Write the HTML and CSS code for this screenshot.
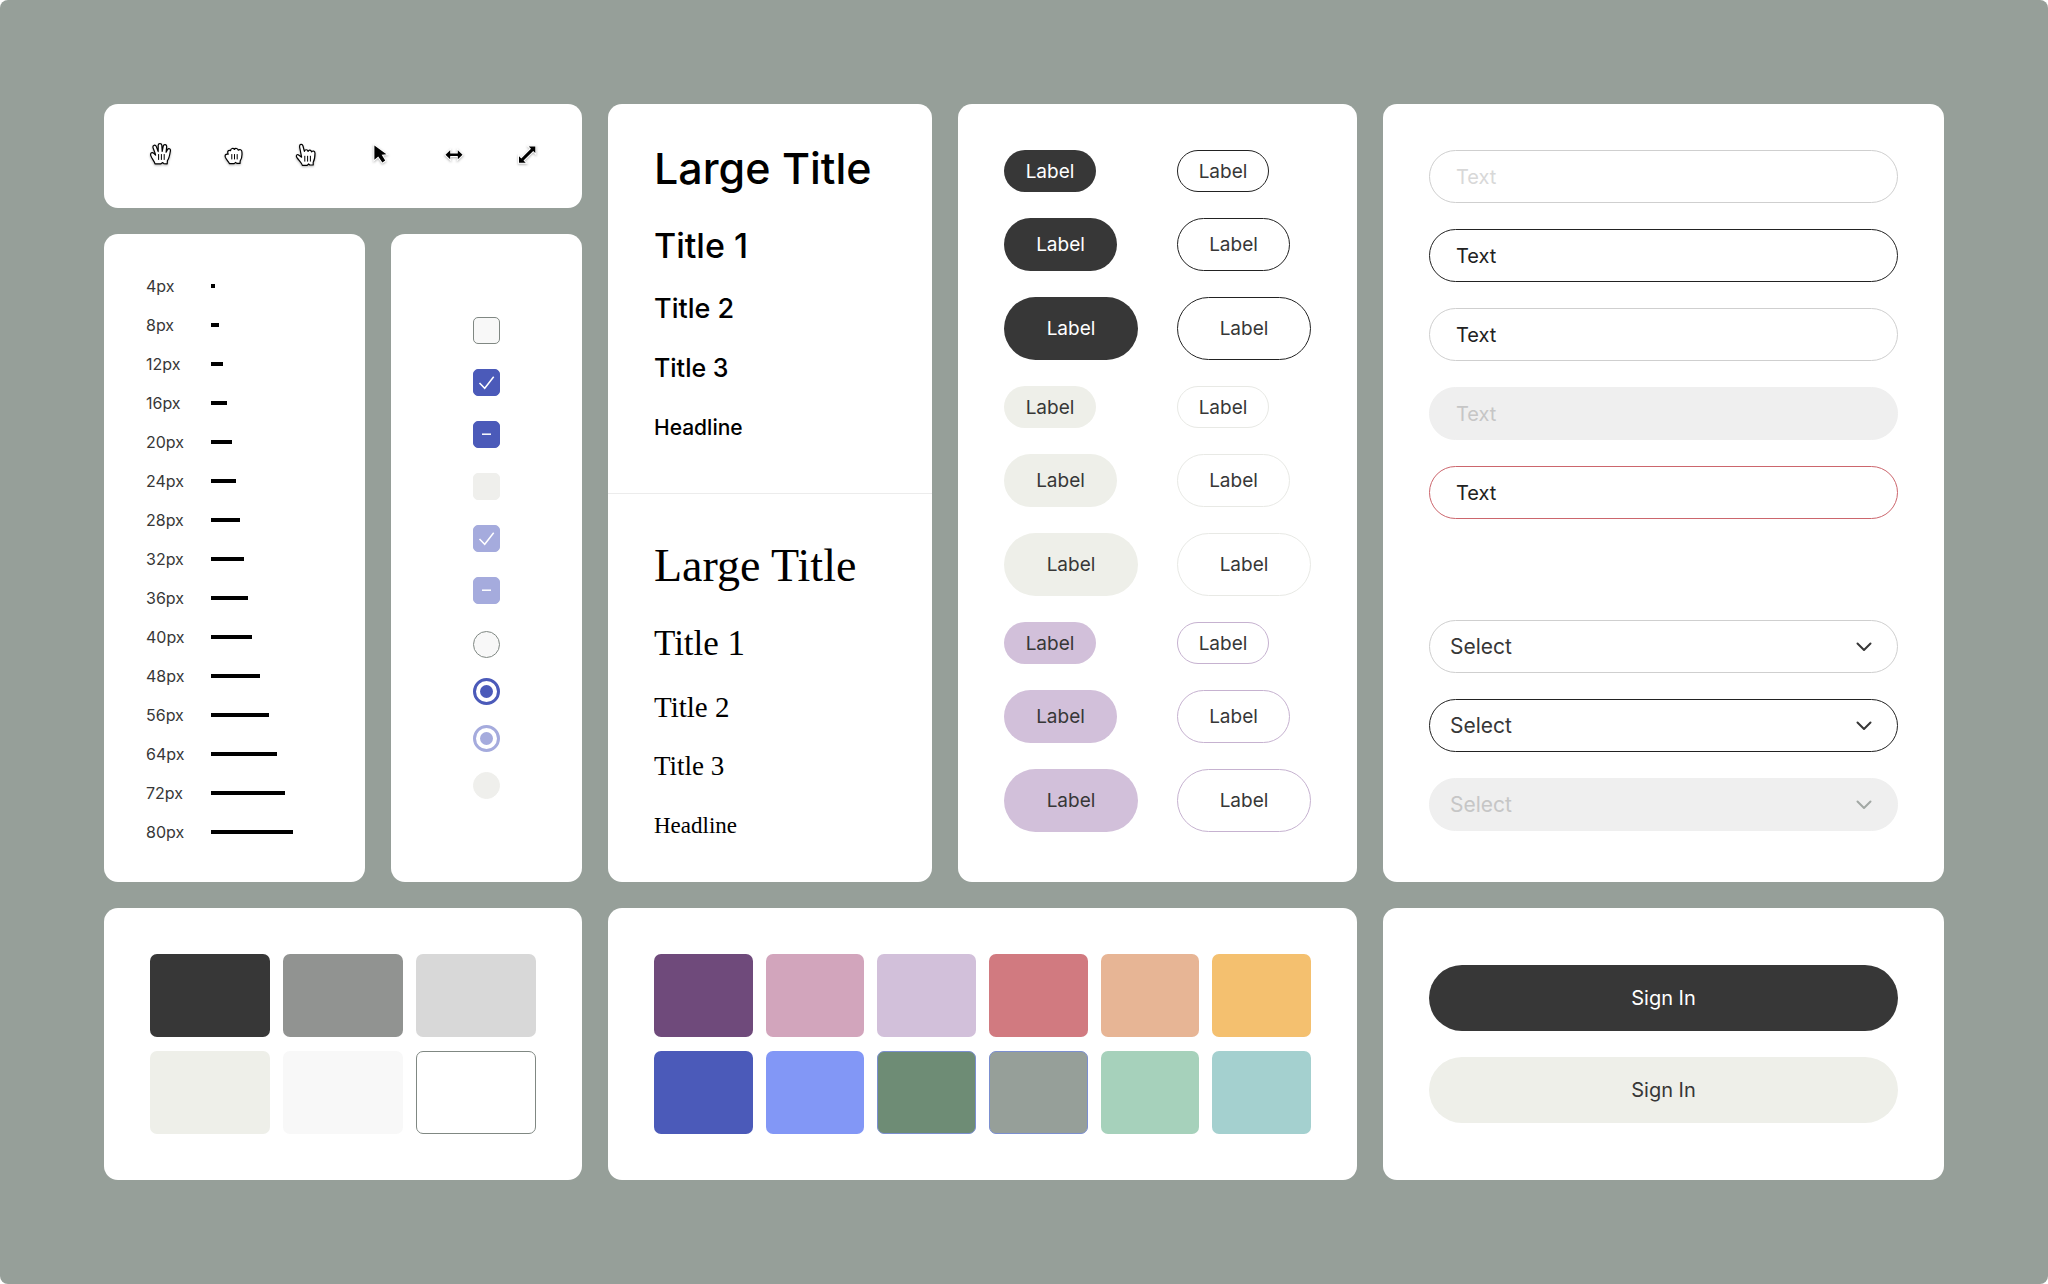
FILE: index.html
```html
<!DOCTYPE html>
<html lang="en">
<head>
    <meta charset="UTF-8">
    <meta name="viewport" content="width=device-width, initial-scale=1.0">
    <title>Design System</title>
    <link rel="stylesheet" href="styles.css">
</head>
<body>
    <main class="board">
        <!-- Cursors -->
        <section class="panel cursors">
            <svg class="cursor hand" viewBox="0 0 32 32" role="img" aria-label="Open hand">
                <path d="M11 24.8C10.6 22.6 7.6 19.4 6.8 16.6C6 13.8 8.4 12.8 9.8 14.4L11.6 16.2C11.3 13.6 9.6 10.8 9 8.6C8.5 6 11.4 5.4 12.3 7.6L14.2 12.6L14.2 6.2C14.3 4 17.6 4 17.8 6.2L18.2 12.4L19.3 7C19.8 4.8 22.8 5.2 22.7 7.6L22.1 13.2L23.6 10.4C24.6 8.8 26.8 9.6 26.4 11.8C25.8 15.4 25.4 19.2 23.4 21.6L23.2 24.8L19.8 24.6L18.4 23.6L17 24.8Z"/>
                <path class="lines" d="M14.6 15.5V20.5M17.4 15.5V20.5M20.2 15.5V20.5"/>
            </svg>
            <svg class="cursor hand" viewBox="0 0 32 32" role="img" aria-label="Closed hand">
                <path d="M12.4 24.6C12 23 9.2 20.6 8.4 18.4C7.6 16 8.6 14.8 11.2 15.2C10.2 12.6 10.8 10.8 13.6 11.6C13.6 9.2 16.4 8.8 17.4 10.4C18.4 8.8 20.8 9.4 21.2 11.2C22.8 9.8 24.8 11 24.9 12.8C25.2 16 25.2 19.4 23.2 21.8L23 24.4L19.8 24.4L18.6 23.4L17.2 24.6Z"/>
                <path class="lines" d="M14.8 15.5V20M17.5 15.5V20M20.2 15.5V20"/>
            </svg>
            <svg class="cursor hand" viewBox="0 0 32 32" role="img" aria-label="Pointing hand">
                <path d="M12.4 26.4C12 24.2 8.8 21.4 6.8 18.4C5.4 16 7.4 14.8 9 16.2L11.6 18.2L9.6 8C9.2 5 12.2 4.4 13 7L14.4 12.4C15 10 17.6 10.4 18 12.4C19 10.4 21.2 11 21.6 13C22.8 11.2 25 12 25 14.2C25 17.6 24.6 20.8 23.2 23.2L23.2 26L19.8 26L18.6 25L17.2 26.4Z"/>
                <path class="lines" d="M14.8 17.2V22.2M17.6 17.2V22.2M20.4 17.2V22.2"/>
            </svg>
            <svg class="cursor solid" viewBox="0 0 32 32" role="img" aria-label="Arrow">
                <path d="M10.4 6.5V20.8L14.2 17.4L18.4 23.4L21.2 21.6L17.6 15.8L22.4 15.2Z"/>
            </svg>
            <svg class="cursor solid" viewBox="0 0 32 32" role="img" aria-label="Resize horizontally">
                <path d="M8.5 15.7L13.2 11.2V14.5H20.8V11.2L25.5 15.7L20.8 20.2V16.9H13.2V20.2Z"/>
            </svg>
            <svg class="cursor solid" viewBox="0 0 32 32" role="img" aria-label="Resize diagonally">
                <path d="M25.3 7.5V14L23.2 11.9L13.5 21.5L15.7 23.8H9V17.2L11.3 19.4L21 9.7L18.8 7.5Z"/>
            </svg>
        </section>

        <!-- Spacing scale -->
        <section class="panel spacing">
            <ul class="scale">
                <li><span>4px</span><i class="bar" style="width: 4px"></i></li>
                <li><span>8px</span><i class="bar" style="width: 8px"></i></li>
                <li><span>12px</span><i class="bar" style="width: 12px"></i></li>
                <li><span>16px</span><i class="bar" style="width: 16px"></i></li>
                <li><span>20px</span><i class="bar" style="width: 21px"></i></li>
                <li><span>24px</span><i class="bar" style="width: 25px"></i></li>
                <li><span>28px</span><i class="bar" style="width: 29px"></i></li>
                <li><span>32px</span><i class="bar" style="width: 33px"></i></li>
                <li><span>36px</span><i class="bar" style="width: 37px"></i></li>
                <li><span>40px</span><i class="bar" style="width: 41px"></i></li>
                <li><span>48px</span><i class="bar" style="width: 49px"></i></li>
                <li><span>56px</span><i class="bar" style="width: 58px"></i></li>
                <li><span>64px</span><i class="bar" style="width: 66px"></i></li>
                <li><span>72px</span><i class="bar" style="width: 74px"></i></li>
                <li><span>80px</span><i class="bar" style="width: 82px"></i></li>
            </ul>
        </section>

        <!-- Checkboxes and radios -->
        <section class="panel toggles">
            <div class="checks">
                <label class="check"><input type="checkbox" aria-label="Unchecked"></label>
                <label class="check">
                    <input type="checkbox" aria-label="Checked" checked>
                    <svg viewBox="0 0 27 27"><path d="M6.5 14L11.7 19.3L20.7 7.8"/></svg>
                </label>
                <label class="check">
                    <input type="checkbox" aria-label="Mixed" checked>
                    <svg viewBox="0 0 27 27"><path d="M9 13.2H18"/></svg>
                </label>
                <label class="check"><input type="checkbox" aria-label="Unchecked, disabled" disabled></label>
                <label class="check">
                    <input type="checkbox" aria-label="Checked, disabled" checked disabled>
                    <svg viewBox="0 0 27 27"><path d="M6.5 14L11.7 19.3L20.7 7.8"/></svg>
                </label>
                <label class="check">
                    <input type="checkbox" aria-label="Mixed, disabled" checked disabled>
                    <svg viewBox="0 0 27 27"><path d="M9 13.2H18"/></svg>
                </label>
            </div>
            <div class="radios">
                <label class="radio"><input type="radio" name="radio-a" aria-label="Off"></label>
                <label class="radio"><input type="radio" name="radio-b" aria-label="On" checked></label>
                <label class="radio"><input type="radio" name="radio-c" aria-label="On, disabled" checked disabled></label>
                <label class="radio"><input type="radio" name="radio-d" aria-label="Off, disabled" disabled></label>
            </div>
        </section>

        <!-- Typography -->
        <section class="panel type">
            <div class="type-sans">
                <h1 class="large-title">Large Title</h1>
                <h2 class="title-1">Title 1</h2>
                <h3 class="title-2">Title 2</h3>
                <h4 class="title-3">Title 3</h4>
                <h5 class="headline">Headline</h5>
            </div>
            <div class="type-serif">
                <h1 class="large-title">Large Title</h1>
                <h2 class="title-1">Title 1</h2>
                <h3 class="title-2">Title 2</h3>
                <h4 class="title-3">Title 3</h4>
                <h5 class="headline">Headline</h5>
            </div>
        </section>

        <!-- Buttons -->
        <section class="panel buttons">
            <button class="btn small dark">Label</button>
            <button class="btn small outline-dark">Label</button>
            <button class="btn medium dark">Label</button>
            <button class="btn medium outline-dark">Label</button>
            <button class="btn large dark">Label</button>
            <button class="btn large outline-dark">Label</button>

            <button class="btn small sand">Label</button>
            <button class="btn small outline-sand">Label</button>
            <button class="btn medium sand">Label</button>
            <button class="btn medium outline-sand">Label</button>
            <button class="btn large sand">Label</button>
            <button class="btn large outline-sand">Label</button>

            <button class="btn small lilac">Label</button>
            <button class="btn small outline-lilac">Label</button>
            <button class="btn medium lilac">Label</button>
            <button class="btn medium outline-lilac">Label</button>
            <button class="btn large lilac">Label</button>
            <button class="btn large outline-lilac">Label</button>
        </section>

        <!-- Inputs and selects -->
        <section class="panel fields">
            <div class="field-group">
                <input class="field" type="text" placeholder="Text" aria-label="Empty">
                <input class="field focused" type="text" value="Text" aria-label="Focused">
                <input class="field" type="text" value="Text" aria-label="Filled">
                <input class="field" type="text" value="Text" aria-label="Disabled" disabled>
                <input class="field error" type="text" value="Text" aria-label="Error">
            </div>
            <div class="field-group">
                <div class="select">
                    <select class="field" aria-label="Select"><option>Select</option></select>
                    <svg class="chevron" viewBox="0 0 16 10"><path d="M1.5 1.5L8 8L14.5 1.5"/></svg>
                </div>
                <div class="select">
                    <select class="field focused" aria-label="Select, focused"><option>Select</option></select>
                    <svg class="chevron" viewBox="0 0 16 10"><path d="M1.5 1.5L8 8L14.5 1.5"/></svg>
                </div>
                <div class="select">
                    <select class="field" aria-label="Select, disabled" disabled><option>Select</option></select>
                    <svg class="chevron" viewBox="0 0 16 10"><path d="M1.5 1.5L8 8L14.5 1.5"/></svg>
                </div>
            </div>
        </section>

        <!-- Neutrals -->
        <section class="panel swatches neutrals">
            <div class="swatch charcoal"></div>
            <div class="swatch gray"></div>
            <div class="swatch silver"></div>
            <div class="swatch bone"></div>
            <div class="swatch snow"></div>
            <div class="swatch white"></div>
        </section>

        <!-- Palette -->
        <section class="panel swatches palette">
            <div class="swatch plum"></div>
            <div class="swatch pink"></div>
            <div class="swatch lavender"></div>
            <div class="swatch red"></div>
            <div class="swatch peach"></div>
            <div class="swatch yellow"></div>
            <div class="swatch indigo"></div>
            <div class="swatch blue"></div>
            <div class="swatch green"></div>
            <div class="swatch sage"></div>
            <div class="swatch mint"></div>
            <div class="swatch teal"></div>
        </section>

        <!-- Sign in -->
        <section class="panel sign-in">
            <button class="btn block dark">Sign In</button>
            <button class="btn block sand">Sign In</button>
        </section>
    </main>
</body>
</html>
```
FILE: styles.css
```css
* {
    box-sizing: border-box;
}

body {
    margin: 0;
    background: #ffffff;
    font-family: Inter, "Liberation Sans", sans-serif;
    color: #373737;
}

.board {
    min-height: 100vh;
    padding: 104px;
    background: #969f99;
    border-radius: 8px;
    display: grid;
    grid-template-columns: 261fr 191fr 324fr 399fr 561fr;
    grid-template-rows: 104px auto auto;
    grid-template-areas:
        "cursors cursors type buttons fields"
        "spacing toggles type buttons fields"
        "neutrals neutrals palette palette signin";
    align-content: start;
    gap: 26px;
}

.panel {
    min-width: 0;
    background: #ffffff;
    border-radius: 14px;
}

/* Cursors */
.cursors {
    grid-area: cursors;
    display: flex;
    align-items: center;
    justify-content: space-between;
    padding: 0 40px 2px;
}

.cursor {
    width: 32px;
    height: 32px;
    filter: drop-shadow(0 1px 1px rgba(0, 0, 0, 0.3));
}

.hand path {
    fill: #ffffff;
    stroke: #000000;
    stroke-width: 1.2;
    stroke-linejoin: round;
    stroke-linecap: round;
}

.hand .lines {
    fill: none;
    stroke-width: 1;
}

.solid path {
    fill: #000000;
    stroke: #ffffff;
    stroke-width: 2;
    paint-order: stroke;
}

/* Spacing scale */
.spacing {
    grid-area: spacing;
    padding: 32px 42px 31px;
}

.scale {
    margin: 0;
    padding: 0;
    list-style: none;
    font-size: 16px;
}

.scale li {
    display: flex;
    align-items: center;
    height: 39px;
}

.scale span {
    width: 65px;
}

.bar {
    height: 4px;
    background: #000000;
}

/* Checkboxes and radios */
.toggles {
    grid-area: toggles;
    display: flex;
    flex-direction: column;
    align-items: center;
    justify-content: center;
    gap: 27px;
}

.checks,
.radios {
    display: grid;
    gap: 25px;
}

.radios {
    gap: 20px;
}

.check,
.radio {
    display: grid;
    width: 27px;
    height: 27px;
}

.check input,
.radio input {
    grid-area: 1 / 1;
    appearance: none;
    width: 27px;
    height: 27px;
    margin: 0;
    border: 1px solid #808883;
    border-radius: 5px;
    background: #f8f8f8;
}

.check svg {
    grid-area: 1 / 1;
    width: 27px;
    height: 27px;
    fill: none;
    stroke: #ffffff;
    stroke-width: 1.5;
    pointer-events: none;
}

.check input:checked {
    border-color: #4b5ab9;
    background: #4b5ab9;
}

.check input:disabled,
.radio input:disabled {
    border-color: #efefec;
    background: #efefec;
}

.check input:checked:disabled {
    border-color: #a5abdd;
    background: #a5abdd;
}

.radio input {
    border-radius: 50%;
}

.radio input:checked {
    display: grid;
    place-items: center;
    border: 3px solid #4b5ab9;
    background: #ffffff;
}

.radio input:checked::before {
    content: "";
    width: 13px;
    height: 13px;
    border-radius: 50%;
    background: #4b5ab9;
}

.radio input:checked:disabled {
    border-color: #a5abdd;
}

.radio input:checked:disabled::before {
    background: #a5abdd;
}

/* Typography */
.type {
    grid-area: type;
    color: #000000;
}

.type-sans,
.type-serif {
    display: grid;
    gap: 24px;
    padding: 32px 46px 38px;
}

.type-sans {
    border-bottom: 1px solid #ececec;
    padding-bottom: 47px;
}

.type-serif {
    padding-top: 40px;
    font-family: "Liberation Serif", serif;
}

.type h1,
.type h2,
.type h3,
.type h4,
.type h5 {
    margin: 0;
    font-weight: 400;
    white-space: nowrap;
}

.type .type-sans > * {
    font-weight: 500;
}

.large-title {
    font-size: 43px;
    line-height: 64px;
}

.title-1 {
    font-size: 34px;
    line-height: 44px;
}

.title-2 {
    font-size: 27px;
    line-height: 34px;
}

.title-3 {
    font-size: 25px;
    line-height: 36px;
}

.headline {
    font-size: 21px;
    line-height: 36px;
}

.type-serif .large-title {
    font-size: 46px;
}

.type-serif .title-1 {
    font-size: 35px;
}

.type-serif .title-2 {
    font-size: 29px;
}

.type-serif .title-3 {
    font-size: 27px;
}

.type-serif .headline {
    font-size: 23px;
}

/* Buttons */
.buttons {
    grid-area: buttons;
    display: grid;
    grid-template-columns: auto auto;
    justify-content: space-between;
    justify-items: start;
    align-content: start;
    row-gap: 26px;
    padding: 46px;
}

.btn {
    border: 1px solid transparent;
    border-radius: 33px;
    padding: 0;
    background: #ffffff;
    color: #373737;
    font-family: inherit;
    font-size: 19px;
    cursor: pointer;
}

.small {
    width: 92px;
    height: 42px;
}

.medium {
    width: 113px;
    height: 53px;
}

.large {
    width: 134px;
    height: 63px;
}

.block {
    width: 100%;
    height: 66px;
}

.dark {
    background: #373737;
    color: #ffffff;
}

.sand {
    background: #eeefe9;
}

.lilac {
    background: #d2c0da;
}

.outline-dark {
    border-color: #222222;
}

.outline-sand {
    border-color: #e8e9e5;
}

.outline-lilac {
    border-color: #c6b2d0;
}

/* Inputs and selects */
.fields {
    grid-area: fields;
    display: flex;
    flex-direction: column;
    justify-content: space-between;
    padding: 46px 46px 51px;
}

.field-group {
    display: grid;
    gap: 26px;
}

.field {
    width: 100%;
    height: 53px;
    margin: 0;
    padding: 0 26px;
    border: 1px solid #cfcfcf;
    border-radius: 27px;
    background: #ffffff;
    color: #222222;
    font-family: inherit;
    font-size: 20px;
    outline: none;
}

.field::placeholder {
    color: #d8d8d8;
}

.field.focused {
    border-color: #222222;
}

.field.error {
    border-color: #cc666d;
}

.field:disabled {
    border-color: #efefef;
    background: #efefef;
    color: #c6c6c6;
    opacity: 1;
}

.select {
    display: grid;
    align-items: center;
}

.select .field {
    grid-area: 1 / 1;
    appearance: none;
    padding: 0 20px;
    font-size: 21px;
}

.select .field:enabled {
    color: #373737;
}

.chevron {
    grid-area: 1 / 1;
    justify-self: end;
    width: 16px;
    height: 10px;
    margin-right: 26px;
    fill: none;
    stroke: #373737;
    stroke-width: 2;
    stroke-linecap: round;
    stroke-linejoin: round;
    pointer-events: none;
}

.field:disabled + .chevron {
    stroke: #a2a8a4;
}

/* Swatches */
.swatches {
    display: grid;
    gap: 14px 13px;
    padding: 46px;
}

.neutrals {
    grid-area: neutrals;
    grid-template-columns: repeat(3, 1fr);
}

.palette {
    grid-area: palette;
    grid-template-columns: repeat(6, 1fr);
}

.swatch {
    height: 83px;
    border-radius: 7px;
}

.charcoal { background: #373737; }
.gray { background: #919391; }
.silver { background: #d8d8d8; }
.bone { background: #eeefe9; }
.snow { background: #f8f8f8; }
.white { background: #ffffff; border: 1px solid #808883; }

.plum { background: #6f4a7b; }
.pink { background: #d2a5bc; }
.lavender { background: #d2c0da; }
.red { background: #d17a80; }
.peach { background: #e7b595; }
.yellow { background: #f4c06f; }
.indigo { background: #4b5ab9; }
.blue { background: #8297f6; }
.green { background: #6e8c75; border: 1px solid #7b8fd0; }
.sage { background: #969f99; border: 1px solid #7b8fd0; }
.mint { background: #a6d1bb; }
.teal { background: #a4d0cf; }

/* Sign in */
.sign-in {
    grid-area: signin;
    display: flex;
    flex-direction: column;
    justify-content: center;
    gap: 26px;
    padding: 46px;
}

.sign-in .btn {
    font-size: 20px;
}
```
